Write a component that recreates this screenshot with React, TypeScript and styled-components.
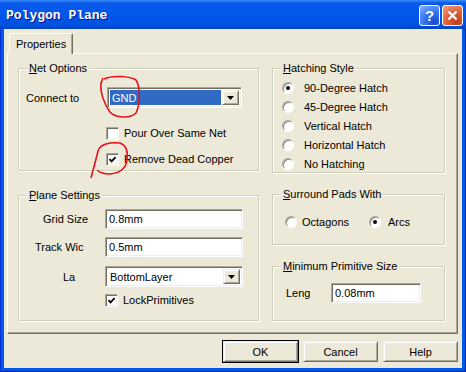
import React from 'react';
import styled, { createGlobalStyle } from 'styled-components';

const GlobalStyle = createGlobalStyle`
  html, body {
    margin: 0;
    padding: 0;
    background: #fff;
  }
  body {
    font-family: "Liberation Sans", Arial, sans-serif;
    font-size: 11px;
    color: #000;
  }
`;

const sunken = `
  border: 1px solid;
  border-color: #aca899 #fff #fff #aca899;
  box-shadow: inset 1px 1px 0 #716f64, inset -1px -1px 0 #f1efe2;
`;

const raised = `
  border: 1px solid;
  border-color: #f1efe2 #716f64 #716f64 #f1efe2;
  box-shadow: inset 1px 1px 0 #fff, inset -1px -1px 0 #aca899;
`;

const Window = styled.div`
  position: relative;
  width: 466px;
  height: 372px;
  display: flex;
  flex-direction: column;
  background: #0058e6;
  box-shadow: inset 1px 0 #0831d9, inset -1px 0 #001ea0, inset 0 -1px #001ea0;
  overflow: hidden;
`;

const TitleBar = styled.div`
  height: 29px;
  flex: none;
  display: flex;
  align-items: center;
  justify-content: space-between;
  padding: 0 3px 0 6px;
  background: linear-gradient(#3a8eff 0, #0a5ae8 3px, #0058ee 45%, #0052e0 85%, #0044c4 100%);
`;

const TitleText = styled.span`
  color: #fff;
  font: bold 13px "Liberation Mono", "Courier New", monospace;
  text-shadow: 1px 1px 0 #0f1089;
  margin-top: 1px;
`;

const CaptionButtons = styled.div`
  display: flex;
  gap: 2px;
  margin-top: 2px;
`;

const CaptionButton = styled.div<{ $kind: 'help' | 'close' }>`
  width: 21px;
  height: 21px;
  box-sizing: border-box;
  border: 1px solid #fff;
  border-radius: 3px;
  display: flex;
  align-items: center;
  justify-content: center;
  color: #fff;
  font: bold 15px "Liberation Sans", Arial, sans-serif;
  background: ${p =>
    p.$kind === 'close'
      ? 'radial-gradient(circle at 75% 85%, #c23d14 0%, #e0643a 50%, #f0a080 100%)'
      : 'radial-gradient(circle at 75% 85%, #1b49cf 0%, #3877f0 50%, #8db3fb 100%)'};
`;

const Client = styled.div`
  flex: 1;
  margin: 0 4px 4px;
  padding: 4px 4px 0 3px;
  background: #ece9d8;
  display: flex;
  flex-direction: column;
`;

const TabStrip = styled.div`
  display: flex;
  padding-left: 2px;
`;

const Tab = styled.div`
  position: relative;
  z-index: 1;
  height: 21px;
  margin-bottom: -1px;
  padding: 0 6px 0 6px;
  box-sizing: border-box;
  display: flex;
  align-items: center;
  background: #ece9d8;
  border: 1px solid;
  border-bottom: none;
  border-color: #fff #716f64 transparent #fff;
  border-radius: 2px 2px 0 0;
  box-shadow: inset -1px 0 0 #aca899;
`;

const TabPage = styled.div`
  height: 281px;
  box-sizing: border-box;
  border: 1px solid;
  border-color: #fff #716f64 #716f64 #fff;
  box-shadow: inset -1px -1px 0 #aca899;
  padding: 8px 11px 0 10px;
  display: grid;
  grid-template-columns: 241px 173px;
  column-gap: 13px;
  align-items: start;
`;

const Column = styled.div<{ $gap: number }>`
  display: flex;
  flex-direction: column;
  gap: ${p => p.$gap}px;
`;

const Group = styled.fieldset<{ $h: number }>`
  margin: 0;
  padding: 0;
  min-width: 0;
  height: ${p => p.$h}px;
  box-sizing: border-box;
  border: 1px solid #d0d0bf;
  box-shadow: inset 1px 1px 0 #fff, 1px 1px 0 #fff;
`;

const Legend = styled.legend`
  margin-left: 8px;
  padding: 0 2px;
  line-height: 13px;
  background: #ece9d8;
`;

const GroupBody = styled.div<{ $pt: number; $pl: number }>`
  display: flex;
  flex-direction: column;
  padding: ${p => p.$pt}px 0 0 ${p => p.$pl}px;
`;

const FieldRow = styled.div<{ $mt?: number }>`
  display: flex;
  align-items: center;
  margin-top: ${p => p.$mt ?? 0}px;
`;

const FieldLabel = styled.span<{ $w: number; $indent?: number }>`
  width: ${p => p.$w}px;
  box-sizing: border-box;
  padding-left: ${p => p.$indent ?? 0}px;
  white-space: nowrap;
  overflow: hidden;
`;

const TextBox = styled.div<{ $w: number }>`
  ${sunken}
  width: ${p => p.$w}px;
  height: 20px;
  box-sizing: border-box;
  padding-left: 3px;
  background: #fff;
  display: flex;
  align-items: center;
`;

const Combo = styled.div<{ $w: number }>`
  ${sunken}
  width: ${p => p.$w}px;
  height: 21px;
  box-sizing: border-box;
  padding: 2px;
  background: #fff;
  display: flex;
`;

const ComboValue = styled.div<{ $active?: boolean }>`
  flex: 1;
  margin-right: 1px;
  padding-left: 2px;
  display: flex;
  align-items: center;
  background: ${p => (p.$active ? '#316ac5' : 'transparent')};
  color: ${p => (p.$active ? '#fff' : '#000')};
`;

const DropButton = styled.div`
  ${raised}
  width: 17px;
  box-sizing: border-box;
  background: #ece9d8;
  display: flex;
  align-items: center;
  justify-content: center;
`;

const Option = styled.div<{ $gap: number; $h?: number; $w?: number }>`
  display: flex;
  align-items: center;
  gap: ${p => p.$gap}px;
  height: ${p => p.$h ?? 16}px;
  width: ${p => (p.$w ? `${p.$w}px` : 'auto')};
  flex: none;
  white-space: nowrap;
`;

const CheckBox = styled.span`
  ${sunken}
  width: 13px;
  height: 13px;
  box-sizing: border-box;
  background: #fff;
  display: flex;
  align-items: center;
  justify-content: center;
  flex: none;
`;

const RadioCircle = styled.span<{ $on?: boolean }>`
  width: 12px;
  height: 12px;
  box-sizing: border-box;
  border-radius: 50%;
  border: 1px solid;
  border-color: #aca899 #fff #fff #aca899;
  box-shadow: inset 1px 1px 0 #8d8b80;
  background: #fff;
  display: flex;
  align-items: center;
  justify-content: center;
  flex: none;

  &::after {
    content: '';
    display: ${p => (p.$on ? 'block' : 'none')};
    width: 4px;
    height: 4px;
    border-radius: 50%;
    background: #000;
  }
`;

const RadioRow = styled.div`
  display: flex;
`;

const ButtonBar = styled.div`
  display: flex;
  justify-content: flex-end;
  gap: 5px;
  margin-top: 7px;
`;

const DialogButton = styled.div<{ $default?: boolean }>`
  ${raised}
  width: 75px;
  height: 21px;
  box-sizing: border-box;
  display: flex;
  align-items: center;
  justify-content: center;
  background: #ece9d8;
  ${p => (p.$default ? 'outline: 1px solid #000;' : '')}
`;

const Annotation = styled.svg`
  position: absolute;
  left: 0;
  top: 0;
  pointer-events: none;
`;

const Arrow = () => (
  <svg width="7" height="4" viewBox="0 0 7 4">
    <path d="M0 0h7L3.5 4z" fill="#000" />
  </svg>
);

const Check = ({ on }: { on?: boolean }) => (
  <CheckBox>
    {on && (
      <svg width="9" height="9" viewBox="0 0 9 9">
        <path d="M1.5 4.2 L3.6 6.4 L7.6 2.2" fill="none" stroke="#000" strokeWidth="1.9" />
      </svg>
    )}
  </CheckBox>
);

const hatching = ['90-Degree Hatch', '45-Degree Hatch', 'Vertical Hatch', 'Horizontal Hatch', 'No Hatching'];

export default function App() {
  return (
    <>
      <GlobalStyle />
      <Window>
        <TitleBar>
          <TitleText>Polygon Plane</TitleText>
          <CaptionButtons>
            <CaptionButton $kind="help">?</CaptionButton>
            <CaptionButton $kind="close">
              <svg width="11" height="11" viewBox="0 0 11 11">
                <path d="M1.5 1.5 L9.5 9.5 M9.5 1.5 L1.5 9.5" stroke="#fff" strokeWidth="2.2" />
              </svg>
            </CaptionButton>
          </CaptionButtons>
        </TitleBar>

        <Client>
          <TabStrip>
            <Tab>Properties</Tab>
          </TabStrip>
          <TabPage>
            <Column $gap={18}>
              <Group $h={109}>
                <Legend>
                  <u>N</u>et Options
                </Legend>
                <GroupBody $pt={12} $pl={7}>
                  <FieldRow>
                    <FieldLabel $w={81}>Connect to</FieldLabel>
                    <Combo $w={135}>
                      <ComboValue $active>GND</ComboValue>
                      <DropButton>
                        <Arrow />
                      </DropButton>
                    </Combo>
                  </FieldRow>
                  <FieldRow $mt={17}>
                    <FieldLabel $w={80} />
                    <Option $gap={5}>
                      <Check />
                      Pour Over Same Net
                    </Option>
                  </FieldRow>
                  <FieldRow $mt={10}>
                    <FieldLabel $w={80} />
                    <Option $gap={5}>
                      <Check on />
                      Remove Dead Copper
                    </Option>
                  </FieldRow>
                </GroupBody>
              </Group>

              <Group $h={132}>
                <Legend>
                  <u>P</u>lane Settings
                </Legend>
                <GroupBody $pt={7} $pl={0}>
                  <FieldRow>
                    <FieldLabel $w={86} $indent={24}>Grid Size</FieldLabel>
                    <TextBox $w={138}>0.8mm</TextBox>
                  </FieldRow>
                  <FieldRow $mt={8}>
                    <FieldLabel $w={86} $indent={16}>Track Wic</FieldLabel>
                    <TextBox $w={138}>0.5mm</TextBox>
                  </FieldRow>
                  <FieldRow $mt={9}>
                    <FieldLabel $w={86} $indent={44}>La</FieldLabel>
                    <Combo $w={138}>
                      <ComboValue>BottomLayer</ComboValue>
                      <DropButton>
                        <Arrow />
                      </DropButton>
                    </Combo>
                  </FieldRow>
                  <FieldRow $mt={5}>
                    <FieldLabel $w={86} />
                    <Option $gap={5}>
                      <Check on />
                      LockPrimitives
                    </Option>
                  </FieldRow>
                </GroupBody>
              </Group>
            </Column>

            <Column $gap={15}>
              <Group $h={111}>
                <Legend>
                  <u>H</u>atching Style
                </Legend>
                <GroupBody $pt={3} $pl={9}>
                  {hatching.map((label, i) => (
                    <Option key={label} $gap={10} $h={19}>
                      <RadioCircle $on={i === 0} />
                      {label}
                    </Option>
                  ))}
                </GroupBody>
              </Group>

              <Group $h={57}>
                <Legend>
                  <u>S</u>urround Pads With
                </Legend>
                <GroupBody $pt={13} $pl={12}>
                  <RadioRow>
                    <Option $gap={5} $w={84}>
                      <RadioCircle />
                      Octagons
                    </Option>
                    <Option $gap={7}>
                      <RadioCircle $on />
                      Arcs
                    </Option>
                  </RadioRow>
                </GroupBody>
              </Group>

              <Group $h={61}>
                <Legend>
                  <u>M</u>inimum Primitive Size
                </Legend>
                <GroupBody $pt={10} $pl={0}>
                  <FieldRow>
                    <FieldLabel $w={58} $indent={13}>Leng</FieldLabel>
                    <TextBox $w={90}>0.08mm</TextBox>
                  </FieldRow>
                </GroupBody>
              </Group>
            </Column>
          </TabPage>

          <ButtonBar>
            <DialogButton $default>OK</DialogButton>
            <DialogButton>Cancel</DialogButton>
            <DialogButton>Help</DialogButton>
          </ButtonBar>
        </Client>

        <Annotation width="466" height="372" viewBox="0 0 466 372">
          <path
            d="M104 79 C112 75, 130 76, 136 80 C141 88, 140 105, 136 113 C130 119, 115 118, 110 112 C104 104, 100 92, 101 83 L103 78"
            fill="none"
            stroke="#e8101a"
            strokeWidth="1.6"
          />
          <path
            d="M91 178 C93 170, 96 160, 98 151 C100 144, 110 142, 120 143 C126 145, 128 152, 127 160 C126 168, 120 173, 110 174 C103 174, 99 172, 97 170"
            fill="none"
            stroke="#e8101a"
            strokeWidth="1.6"
          />
        </Annotation>
      </Window>
    </>
  );
}
